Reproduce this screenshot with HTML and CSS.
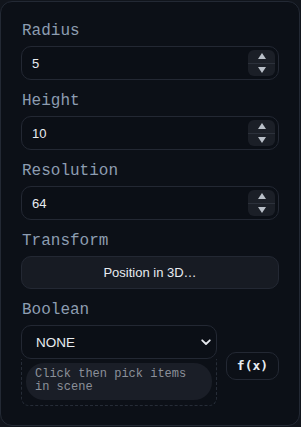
FILE: index.html
```html
<!DOCTYPE html>
<html>
<head>
<meta charset="utf-8">
<link rel="stylesheet" href="styles.css">
</head>
<body>
<div class="panel">
  <div class="field">
    <div class="label">Radius</div>
    <div class="num">
      <span class="val">5</span>
      <span class="spin"><span class="up"></span><span class="sep"></span><span class="down"></span></span>
    </div>
  </div>
  <div class="field">
    <div class="label">Height</div>
    <div class="num">
      <span class="val">10</span>
      <span class="spin"><span class="up"></span><span class="sep"></span><span class="down"></span></span>
    </div>
  </div>
  <div class="field">
    <div class="label">Resolution</div>
    <div class="num">
      <span class="val">64</span>
      <span class="spin"><span class="up"></span><span class="sep"></span><span class="down"></span></span>
    </div>
  </div>
  <div class="field">
    <div class="label">Transform</div>
    <div class="btn">Position in 3D…</div>
  </div>
  <div class="field">
    <div class="label">Boolean</div>
    <div class="boolrow">
      <div class="boolcol">
        <div class="select">
          <span>NONE</span>
          <svg class="chev" width="10" height="7" viewBox="0 0 10 7"><path d="M1.2 1.3 L5 5 L8.8 1.3" fill="none" stroke="#e6e9ee" stroke-width="1.8" stroke-linecap="round" stroke-linejoin="round"/></svg>
        </div>
        <div class="pickbox">
          <div class="pick">Click then pick items in scene</div>
        </div>
      </div>
      <div class="fx">f(x)</div>
    </div>
  </div>
</div>
</body>
</html>
```

FILE: styles.css
```css
* { box-sizing: border-box; }
html, body { margin: 0; padding: 0; }
body {
  background: #11151c;
  width: 301px;
  height: 427px;
  overflow: hidden;
}
.panel {
  margin: 1px 1px 0 0;
  height: 425px;
  background: #0c1017;
  border: 1px solid #232934;
  border-radius: 12px;
  padding: 19px 20px 0 20px;
  display: flex;
  flex-direction: column;
  gap: 11px;
}
.field { display: flex; flex-direction: column; }
.label {
  font-family: "Liberation Mono", "DejaVu Sans Mono", monospace;
  font-size: 16px;
  line-height: 20px;
  color: #8d9db1;
  margin-bottom: 5px;
  padding-left: 1px;
}
.num {
  height: 34px;
  border: 1px solid #232833;
  border-radius: 10px;
  background: #0b0f16;
  display: flex;
  align-items: center;
  justify-content: space-between;
  padding: 0 3px 0 10px;
}
.val {
  font-family: "Liberation Sans", Arial, sans-serif;
  font-size: 13px;
  color: #e8ecf1;
}
.spin {
  width: 27px;
  height: 26px;
  background: #1b1f27;
  border-radius: 6px;
  display: flex;
  flex-direction: column;
  align-items: center;
  justify-content: center;
}
.up, .down {
  width: 0; height: 0;
  border-left: 4.5px solid transparent;
  border-right: 4.5px solid transparent;
}
.up { border-bottom: 6px solid #b9bfc8; margin-bottom: 3.5px; }
.down { border-top: 6px solid #b9bfc8; margin-top: 3.5px; }
.sep { width: 100%; height: 1px; background: #2c313b; }
.btn {
  height: 33px;
  border: 1px solid #232833;
  border-radius: 10px;
  background: #171b23;
  display: flex;
  align-items: center;
  justify-content: center;
  font-family: "Liberation Sans", Arial, sans-serif;
  font-size: 13px;
  color: #e8ecf1;
}
.boolrow {
  display: flex;
  align-items: center;
  gap: 9px;
}
.boolcol { width: 196px; display: flex; flex-direction: column; }
.select {
  height: 34px;
  border: 1px solid #232833;
  border-radius: 10px;
  background: #0b0f16;
  display: flex;
  align-items: center;
  justify-content: space-between;
  padding: 0 5px 0 14px;
  font-family: "Liberation Sans", Arial, sans-serif;
  font-size: 13.5px;
  color: #e8ecf1;
}
.pickbox {
  height: 47px;
  border: 1px dashed #262c37;
  border-top: none;
  border-radius: 0 0 8px 8px;
  padding: 4px 4px 5px 4px;
}
.pick {
  height: 37px;
  background: #1a1e27;
  border-radius: 18px;
  padding: 5px 10px 0 9px;
  font-family: "Liberation Mono", "DejaVu Sans Mono", monospace;
  font-size: 12px;
  line-height: 13px;
  color: #8b9099;
}
.fx {
  width: 53px;
  height: 28px;
  border: 1px solid #232833;
  border-radius: 10px;
  display: flex;
  align-items: center;
  justify-content: center;
  font-family: "DejaVu Sans Mono", "Liberation Mono", monospace;
  font-weight: bold;
  font-size: 13px;
  color: #e8ecf1;
}
```
